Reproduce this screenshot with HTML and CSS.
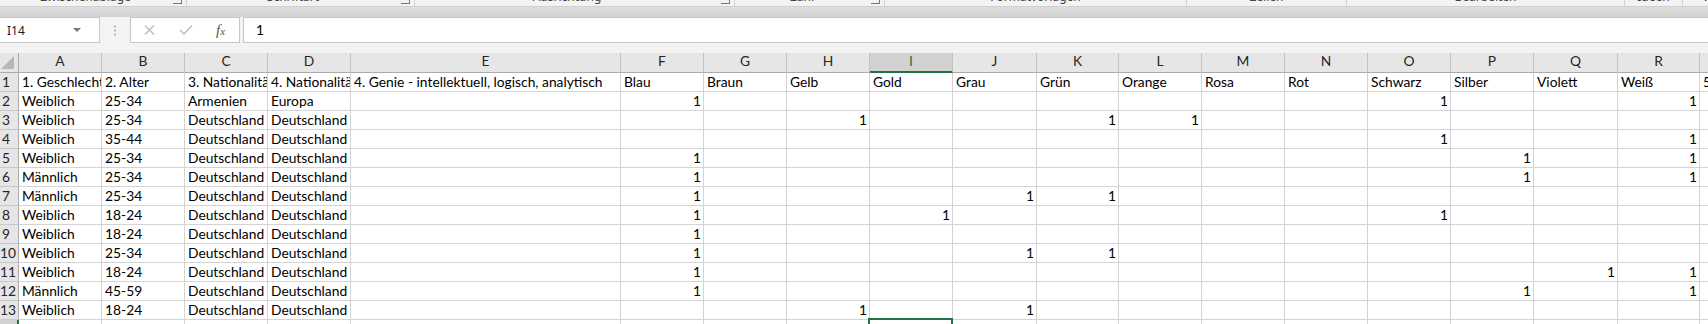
FILE: index.html
```html
<!DOCTYPE html>
<html lang="de">
<head>
  <meta charset="UTF-8">
  <meta name="viewport" content="width=device-width, initial-scale=1.0">
  <title>Umfrage Farben</title>
  <link rel="stylesheet" href="styles.css">
</head>
<body>

  <div class="ribbon">
    <div class="group w-clip"><span class="group-label">Zwischenablage</span><span class="launcher"></span></div>
    <div class="group w-font"><span class="group-label">Schriftart</span><span class="launcher"></span></div>
    <div class="group w-align"><span class="group-label">Ausrichtung</span><span class="launcher"></span></div>
    <div class="group w-number"><span class="group-label">Zahl</span><span class="launcher"></span></div>
    <div class="group w-styles"><span class="group-label">Formatvorlagen</span></div>
    <div class="group w-cells"><span class="group-label">Zellen</span></div>
    <div class="group w-edit"><span class="group-label">Bearbeiten</span></div>
    <div class="group w-ideas"><span class="group-label">Ideen</span></div>
    <div class="group w-rest"><span class="group-label">Vertraulichkeit</span></div>
  </div>
  <div class="ribbon-shadow"></div>

  <div class="formula-bar">
    <div class="name-box">
      <span>I14</span>
      <span class="drop"></span>
    </div>
    <div class="grip">
      <svg width="4" height="11" viewBox="0 0 4 11"><circle cx="2" cy="1.5" r="1" /><circle cx="2" cy="5.5" r="1" /><circle cx="2" cy="9.5" r="1" /></svg>
    </div>
    <div class="fx-buttons">
      <svg class="btn-icon" width="11" height="10" viewBox="0 0 11 10"><path d="M1 0.5 L10 9.5 M10 0.5 L1 9.5" /></svg>
      <svg class="btn-icon" width="14" height="10" viewBox="0 0 14 10"><path d="M1 5 L5 9 L13 0.5" /></svg>
      <span class="fx">f<span class="fx-x">x</span></span>
    </div>
    <div class="formula-input">1</div>
  </div>
  <div class="sheet-gap"></div>

  <div class="sheet" id="sheet"></div>

  <script>
    const columns = ['A', 'B', 'C', 'D', 'E', 'F', 'G', 'H', 'I', 'J', 'K', 'L', 'M', 'N', 'O', 'P', 'Q', 'R', 'S'];

    const titles = ['1. Geschlecht', '2. Alter', '3. Nationalität', '4. Nationalität',
      '4. Genie - intellektuell, logisch, analytisch', 'Blau', 'Braun', 'Gelb', 'Gold', 'Grau',
      'Grün', 'Orange', 'Rosa', 'Rot', 'Schwarz', 'Silber', 'Violett', 'Weiß', '5.'];

    // answers: gender, age, nationality, region, columns marked with 1
    const answers = [
      ['Weiblich', '25-34', 'Armenien', 'Europa', ['F', 'O', 'R']],
      ['Weiblich', '25-34', 'Deutschland', 'Deutschland', ['H', 'K', 'L']],
      ['Weiblich', '35-44', 'Deutschland', 'Deutschland', ['O', 'R']],
      ['Weiblich', '25-34', 'Deutschland', 'Deutschland', ['F', 'P', 'R']],
      ['Männlich', '25-34', 'Deutschland', 'Deutschland', ['F', 'P', 'R']],
      ['Männlich', '25-34', 'Deutschland', 'Deutschland', ['F', 'J', 'K']],
      ['Weiblich', '18-24', 'Deutschland', 'Deutschland', ['F', 'I', 'O']],
      ['Weiblich', '18-24', 'Deutschland', 'Deutschland', ['F']],
      ['Weiblich', '25-34', 'Deutschland', 'Deutschland', ['F', 'J', 'K']],
      ['Weiblich', '18-24', 'Deutschland', 'Deutschland', ['F', 'Q', 'R']],
      ['Männlich', '45-59', 'Deutschland', 'Deutschland', ['F', 'P', 'R']],
      ['Weiblich', '18-24', 'Deutschland', 'Deutschland', ['H', 'J']],
    ];

    const activeCol = 'I';
    const activeRow = 14;

    function addCell(sheet, className, text) {
      const div = document.createElement('div');
      div.className = className;
      div.textContent = text;
      sheet.appendChild(div);
      return div;
    }

    function renderSheet() {
      const sheet = document.getElementById('sheet');
      sheet.innerHTML = '';

      // column headers
      const corner = addCell(sheet, 'corner', '');
      corner.innerHTML = '<svg width="13" height="13" viewBox="0 0 13 13"><polygon points="13,0 13,13 0,13" /></svg>';
      columns.forEach(col => {
        addCell(sheet, col === activeCol ? 'col-head active' : 'col-head', col);
      });

      // row 1: titles
      addCell(sheet, 'row-head', '1');
      titles.forEach(title => addCell(sheet, 'cell', title));

      // answer rows
      answers.forEach((row, i) => {
        addCell(sheet, 'row-head', String(i + 2));
        columns.forEach((col, c) => {
          if (c < 4) {
            addCell(sheet, 'cell', row[c]);
          } else if (row[4].includes(col)) {
            addCell(sheet, 'cell num', '1');
          } else {
            addCell(sheet, 'cell', '');
          }
        });
      });

      // selected empty row
      addCell(sheet, 'row-head active', String(activeRow));
      columns.forEach(col => {
        addCell(sheet, col === activeCol ? 'cell selected' : 'cell', '');
      });
    }

    renderSheet();
  </script>
</body>
</html>
```

FILE: styles.css
```css
* {
  box-sizing: border-box;
}

body {
  margin: 0;
  width: 1708px;
  height: 324px;
  overflow: hidden;
  background-color: #fff;
  font-family: Lato, "Liberation Sans", sans-serif;
}

/* ribbon, only the bottom edge of the group labels shows */
.ribbon {
  display: flex;
  height: 6px;
  overflow: hidden;
  background-color: #f3f3f3;
  font-family: "Noto Sans", "Open Sans", sans-serif;
  font-size: 12px;
  color: #444;
}

.group {
  display: flex;
  flex-shrink: 0;
  border-right: 1px solid #d2d2d2;
}

.group-label {
  flex: 1;
  text-align: center;
  line-height: 14px;
  margin-top: -10px;
  white-space: nowrap;
}

.launcher {
  width: 9px;
  height: 9px;
  margin: -5px 4px 0 2px;
  border-right: 1px solid #777;
  border-bottom: 1px solid #777;
}

.w-clip { width: 187px; }
.w-font { width: 228px; }
.w-align { width: 320px; }
.w-number { width: 150px; }
.w-styles { width: 302px; }
.w-cells { width: 160px; }
.w-edit { width: 278px; }
.w-ideas { width: 58px; }
.w-rest { width: 120px; border-right: none; }

.ribbon-shadow {
  height: 11px;
  border-top: 1px solid #d0d0d0;
  background: linear-gradient(#dedede, #d3d3d3);
}

/* name box and formula bar */
.formula-bar {
  display: flex;
  height: 26px;
  background-color: #f3f3f3;
}

.name-box {
  display: flex;
  align-items: center;
  justify-content: space-between;
  width: 101px;
  margin-left: -1px;
  padding: 0 18px 0 7px;
  background-color: #fff;
  border: 1px solid #c6c6c6;
  font-family: "Noto Sans", "Open Sans", sans-serif;
  font-size: 12px;
  color: #222;
}

.drop {
  width: 0;
  height: 0;
  border-left: 4px solid transparent;
  border-right: 4px solid transparent;
  border-top: 4px solid #7a7a7a;
}

.grip {
  display: flex;
  align-items: center;
  justify-content: center;
  width: 30px;
  fill: #a8a8a8;
}

.fx-buttons {
  display: flex;
  align-items: center;
  width: 110px;
  padding-left: 13px;
  gap: 24px;
  background-color: #fff;
  border: 1px solid #c6c6c6;
}

.btn-icon {
  fill: none;
  stroke: #c2c2c2;
  stroke-width: 1.6;
}

.fx {
  margin-left: -1px;
  font-family: "Liberation Serif", serif;
  font-style: italic;
  font-size: 15px;
  color: #555;
}

.fx-x {
  font-size: 11px;
}

.formula-input {
  flex: 1;
  margin: 0 -2px 0 3px;
  padding-left: 12px;
  line-height: 24px;
  background-color: #fff;
  border: 1px solid #c6c6c6;
  font-size: 13.8px;
  color: #000;
}

.sheet-gap {
  height: 10px;
  background-color: #f3f3f3;
}

/* worksheet grid */
.sheet {
  display: grid;
  grid-template-columns: 19px 83px 83px 83px 83px 270px 83px 83px 83px 83px 84px 82px 83px 83px 83px 83px 83px 84px 82px 120px;
  grid-template-rows: 20px;
  grid-auto-rows: 19px;
  font-size: 13.8px;
}

.corner {
  display: flex;
  align-items: flex-end;
  justify-content: flex-end;
  padding: 0 4px 3px 0;
  background-color: #e6e6e6;
  border-right: 1px solid #ababab;
  border-bottom: 1px solid #ababab;
  fill: #b7b7b7;
}

.col-head {
  text-align: center;
  line-height: 16px;
  color: #262626;
  background-color: #e6e6e6;
  border-right: 1px solid #c3c3c3;
  border-bottom: 1px solid #ababab;
}

.col-head.active {
  background-color: #d2d2d2;
  color: #1e6b41;
  border-bottom: 2px solid #217346;
}

.row-head {
  padding-right: 6px;
  text-align: center;
  line-height: 18px;
  color: #262626;
  background-color: #e6e6e6;
  border-right: 1px solid #ababab;
  border-bottom: 1px solid #c8c8c8;
}

.row-head.active {
  background-color: #d2d2d2;
  border-right: 2px solid #217346;
}

.cell {
  padding: 0 2px 0 3px;
  line-height: 18px;
  white-space: nowrap;
  overflow: hidden;
  color: #000;
  border-right: 1px solid #d4d4d4;
  border-bottom: 1px solid #d4d4d4;
}

.num {
  text-align: right;
}

.selected {
  position: relative;
  overflow: visible;
}

.selected::after {
  content: "";
  position: absolute;
  top: -2px;
  left: -2px;
  right: -1px;
  bottom: -1px;
  border: 2px solid #217346;
}
```
